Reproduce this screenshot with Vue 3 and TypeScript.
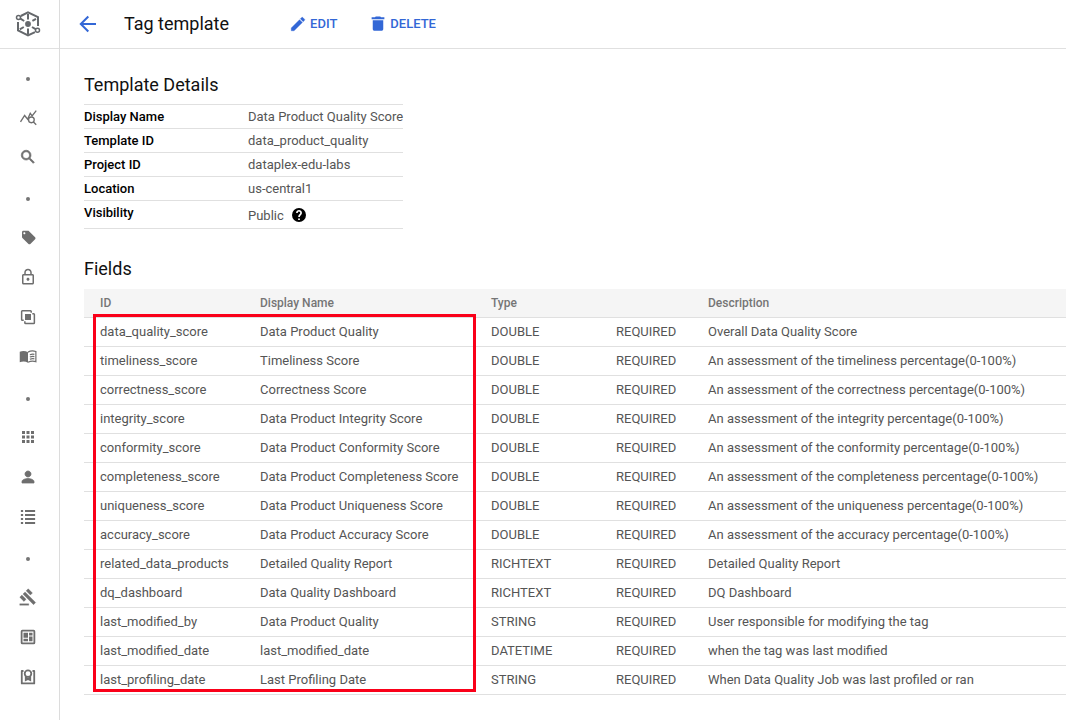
<script setup lang="ts">
interface Field {
  id: string
  name: string
  type: string
  description: string
}

const navItems: { icon: string; label: string }[] = [
  { icon: 'dot', label: 'Discover' },
  { icon: 'insights', label: 'Explore' },
  { icon: 'search', label: 'Search' },
  { icon: 'dot', label: 'Manage metadata' },
  { icon: 'tag', label: 'Tag templates' },
  { icon: 'lock', label: 'Policy tags' },
  { icon: 'copy', label: 'Entry groups' },
  { icon: 'book', label: 'Glossaries' },
  { icon: 'dot', label: 'Manage lakes' },
  { icon: 'grid', label: 'Manage' },
  { icon: 'person', label: 'Secure' },
  { icon: 'list', label: 'Process' },
  { icon: 'dot', label: 'Govern' },
  { icon: 'gavel', label: 'Governance' },
  { icon: 'dashboard', label: 'Profile' },
  { icon: 'badge', label: 'Data quality' },
]

const details = [
  { label: 'Display Name', value: 'Data Product Quality Score' },
  { label: 'Template ID', value: 'data_product_quality' },
  { label: 'Project ID', value: 'dataplex-edu-labs' },
  { label: 'Location', value: 'us-central1' },
]

const assessment = (what: string) => `An assessment of the ${what} percentage(0-100%)`

const fields: Field[] = [
  { id: 'data_quality_score', name: 'Data Product Quality', type: 'DOUBLE', description: 'Overall Data Quality Score' },
  { id: 'timeliness_score', name: 'Timeliness Score', type: 'DOUBLE', description: assessment('timeliness') },
  { id: 'correctness_score', name: 'Correctness Score', type: 'DOUBLE', description: assessment('correctness') },
  { id: 'integrity_score', name: 'Data Product Integrity Score', type: 'DOUBLE', description: assessment('integrity') },
  { id: 'conformity_score', name: 'Data Product Conformity Score', type: 'DOUBLE', description: assessment('conformity') },
  { id: 'completeness_score', name: 'Data Product Completeness Score', type: 'DOUBLE', description: assessment('completeness') },
  { id: 'uniqueness_score', name: 'Data Product Uniqueness Score', type: 'DOUBLE', description: assessment('uniqueness') },
  { id: 'accuracy_score', name: 'Data Product Accuracy Score', type: 'DOUBLE', description: assessment('accuracy') },
  { id: 'related_data_products', name: 'Detailed Quality Report', type: 'RICHTEXT', description: 'Detailed Quality Report' },
  { id: 'dq_dashboard', name: 'Data Quality Dashboard', type: 'RICHTEXT', description: 'DQ Dashboard' },
  { id: 'last_modified_by', name: 'Data Product Quality', type: 'STRING', description: 'User responsible for modifying the tag' },
  { id: 'last_modified_date', name: 'last_modified_date', type: 'DATETIME', description: 'when the tag was last modified' },
  { id: 'last_profiling_date', name: 'Last Profiling Date', type: 'STRING', description: 'When Data Quality Job was last profiled or ran' },
]
</script>

<template>
  <div class="shell">
    <aside class="sidebar">
      <div class="logo">
        <svg width="26" height="26" viewBox="0 0 26 26" fill="none" stroke="#65686c" stroke-width="2">
          <path d="M5.800 5 13 1.300l10 4.900v8.800M3 11v8.300l10 5.200 7-3.400" />
          <path d="M13 3v5.500M13 17.500v5.500M17.400 9.800 21 7.800M4.800 18.300l4-2.300M5 7.400l4.200 2.600M17 16l4 2.400" />
          <circle cx="13" cy="13" r="2.900" fill="#65686c" stroke="none" />
          <circle cx="3.500" cy="6.400" r="2" fill="#fff" stroke-width="1.500" />
          <circle cx="22.500" cy="19.300" r="2" fill="#fff" stroke-width="1.500" />
        </svg>
      </div>
      <nav class="nav" aria-label="Dataplex">
        <a v-for="item in navItems" :key="item.label" href="#" class="nav-item" :class="{ section: item.icon === 'dot' }" :aria-label="item.label">
          <span v-if="item.icon === 'dot'" class="dot"></span>
          <svg v-else class="icon" viewBox="0 0 24 24" fill="currentColor">
            <g v-if="item.icon === 'insights'" fill="none" stroke="currentColor" stroke-width="1.800">
              <path d="M2 18.500 7.500 10l4 5 3.500-8 2.500 3.500L23 3.500" />
              <circle cx="16.500" cy="15.800" r="3.800" fill="#fff" />
              <path d="m19 18.400 4 3.800" />
            </g>
            <path v-else-if="item.icon === 'search'" d="M15.500 14h-.79l-.28-.27A6.470 6.470 0 0 0 16 9.500 6.500 6.500 0 1 0 9.500 16c1.610 0 3.090-.59 4.230-1.570l.27.28v.79l5 4.990L20.490 19l-4.990-5zm-6 0C7.010 14 5 11.990 5 9.500S7.010 5 9.500 5 14 7.010 14 9.500 11.990 14 9.500 14z" stroke="currentColor" stroke-width=".9" />
            <path v-else-if="item.icon === 'tag'" d="M21.410 11.580l-9-9C12.050 2.220 11.550 2 11 2H4c-1.100 0-2 .9-2 2v7c0 .55.22 1.050.59 1.420l9 9c.36.36.86.58 1.410.58s1.050-.22 1.410-.59l7-7c.37-.36.59-.86.59-1.410s-.23-1.060-.59-1.420zM5.500 7C4.670 7 4 6.330 4 5.500S4.670 4 5.500 4 7 4.670 7 5.500 6.330 7 5.500 7z" transform="translate(2.200 2) scale(.9)" />
            <path v-else-if="item.icon === 'lock'" d="M18 8h-1V6c0-2.760-2.240-5-5-5S7 3.240 7 6v2H6c-1.100 0-2 .9-2 2v10c0 1.100.9 2 2 2h12c1.100 0 2-.9 2-2V10c0-1.100-.9-2-2-2zM9 6c0-1.660 1.340-3 3-3s3 1.340 3 3v2H9V6zm9 14H6V10h12v10zm-6-3c1.100 0 2-.9 2-2s-.9-2-2-2-2 .9-2 2 .9 2 2 2z" />
            <g v-else-if="item.icon === 'copy'">
              <path d="M16.300 6.300V4.500q0-1-1-1H4.500q-1 0-1 1v10.800q0 1 1 1h1.800M7.800 17.700v1.800q0 1 1 1h10.700q1 0 1-1V8.800q0-1-1-1h-1.800" fill="none" stroke="currentColor" stroke-width="2" />
              <path d="M8 8h8v8H8z" />
            </g>
            <g v-else-if="item.icon === 'book'">
              <path d="M1 5c3.500-1.700 7.500-1.500 11 .5v14c-3.500-2-7.500-2-11-.5z" />
              <path d="M12 5.500c3.500-2 7-2 10.500-.8v13.500c-3.500-1.200-7-1-10.500.8M14.500 9c2-.8 4-1 6-.6M14.500 12c2-.8 4-1 6-.6M14.500 15c2-.8 4-1 6-.6" fill="none" stroke="currentColor" stroke-width="1.600" />
            </g>
            <path v-else-if="item.icon === 'grid'" d="M4 8h4V4H4v4zm6 12h4v-4h-4v4zm-6 0h4v-4H4v4zm0-6h4v-4H4v4zm6 0h4v-4h-4v4zm6-10v4h4V4h-4zm-6 4h4V4h-4v4zm6 6h4v-4h-4v4zm0 6h4v-4h-4v4z" />
            <path v-else-if="item.icon === 'person'" d="M12 12c2.210 0 4-1.790 4-4s-1.790-4-4-4-4 1.790-4 4 1.790 4 4 4zm0 2c-2.670 0-8 1.340-8 4v2h16v-2c0-2.660-5.330-4-8-4z" stroke="currentColor" />
            <path v-else-if="item.icon === 'list'" d="M2.500 2.700h3v2.600h-3zM2.500 8h3v2.600h-3zM2.500 13.400h3V16h-3zM2.500 18.700h3v2.600h-3zM8 2.700h13.500v2.600H8zM8 8h13.500v2.600H8zM8 13.400h13.500V16H8zM8 18.700h13.500v2.600H8z" />
            <path v-else-if="item.icon === 'gavel'" d="M1 21h12v2H1zM5.245 8.070l2.830-2.827 14.140 14.142-2.828 2.828zM12.317 1l5.657 5.656-2.830 2.830-5.654-5.660zM3.825 9.485l5.657 5.657-2.828 2.828-5.657-5.657z" stroke="currentColor" stroke-width=".4" />
            <g v-else-if="item.icon === 'dashboard'">
              <rect x="3.500" y="3.500" width="17" height="17" rx="1" fill="none" stroke="currentColor" stroke-width="2.400" />
              <path d="M6 6.300h6V13H6zM13.400 6.300H18V10h-4.600zM6 14.400h6v3.400H6zM13.400 11.400H18v6.400h-4.600z" />
            </g>
            <g v-else fill="none" stroke="currentColor" stroke-width="2.400">
              <path d="M6 4H3.700v16.500h16.600V4H18" stroke-linejoin="round" />
              <circle cx="12" cy="7.500" r="4.400" />
              <path d="M7.800 10v8l4.200-2 4.200 2v-8L12 13z" fill="currentColor" stroke="none" />
            </g>
          </svg>
        </a>
      </nav>
    </aside>

    <div class="page">
      <header class="topbar">
        <button type="button" class="back" aria-label="Back">
          <svg width="24" height="24" viewBox="0 0 24 24" fill="none" stroke="currentColor" stroke-width="2">
            <path d="M20 12H5M12.300 4.500 4.800 12l7.500 7.500" />
          </svg>
        </button>
        <h1>Tag template</h1>
        <button type="button" class="action edit">
          <svg width="18" height="18" viewBox="0 0 24 24" fill="currentColor">
            <path d="M3 17.250V21h3.750L17.810 9.940l-3.750-3.750L3 17.250zM20.710 7.040c.39-.39.39-1.020 0-1.410l-2.340-2.340c-.39-.39-1.020-.39-1.410 0l-1.830 1.830 3.750 3.750 1.830-1.830z" stroke="currentColor" stroke-width=".5" />
          </svg>
          EDIT
        </button>
        <button type="button" class="action">
          <svg width="18" height="18" viewBox="0 0 24 24" fill="currentColor">
            <path d="M5 7v11.500C5 20 6 21 7.500 21h9c1.500 0 2.500-1 2.500-2.500V7H5zM20.500 3H16l-1-1H9L8 3H3.500v2.500h17z" />
          </svg>
          DELETE
        </button>
      </header>

      <main class="content">
        <h2>Template Details</h2>
        <table class="details">
          <tbody>
            <tr v-for="row in details" :key="row.label">
              <th scope="row">{{ row.label }}</th>
              <td>{{ row.value }}</td>
            </tr>
            <tr>
              <th scope="row">Visibility</th>
              <td>
                <div class="visibility">
                  Public
                  <button type="button" class="help" aria-label="Help">
                    <svg width="14" height="14" viewBox="2 2 20 20">
                      <circle cx="12" cy="12" r="10" />
                      <path d="M9 9a3 3 0 1 1 5.100 2.100C12.900 12.200 12 13 12 15M12 17v2" fill="none" stroke="#fff" stroke-width="2.400" />
                    </svg>
                  </button>
                </div>
              </td>
            </tr>
          </tbody>
        </table>

        <h2 class="fields-title">Fields</h2>
        <div class="fields-wrap">
          <table class="fields">
            <colgroup>
              <col class="col-id" />
              <col class="col-name" />
              <col class="col-type" />
              <col class="col-mode" />
              <col />
            </colgroup>
            <thead>
              <tr>
                <th scope="col">ID</th>
                <th scope="col">Display Name</th>
                <th scope="col">Type</th>
                <td></td>
                <th scope="col">Description</th>
              </tr>
            </thead>
            <tbody>
              <tr v-for="field in fields" :key="field.id">
                <td>{{ field.id }}</td>
                <td>{{ field.name }}</td>
                <td>{{ field.type }}</td>
                <td>REQUIRED</td>
                <td>{{ field.description }}</td>
              </tr>
            </tbody>
          </table>
          <div class="highlight"></div>
        </div>
      </main>
    </div>
  </div>
</template>

<style>
body {
  margin: 0;
  background: #fff;
}
</style>

<style scoped>
.shell {
  display: flex;
  min-height: 100vh;
  font-family: Roboto, "Liberation Sans", sans-serif;
  font-size: 13px;
  line-height: 20px;
  color: #555;
}

.shell * {
  box-sizing: border-box;
}

.sidebar {
  flex: 0 0 60px;
  border-right: 1px solid #dcdcdc;
}

.logo {
  display: flex;
  align-items: center;
  height: 49px;
  padding-left: 15px;
  border-bottom: 1px solid #e0e0e0;
}

.nav {
  display: flex;
  flex-direction: column;
  padding: 8px 3px 0 0;
}

.nav-item {
  display: flex;
  align-items: center;
  justify-content: center;
  height: 40px;
  color: #6e6e6e;
}

.section {
  padding-top: 4px;
}

.dot {
  width: 4px;
  height: 4px;
  border-radius: 50%;
  background: #757575;
}

.icon {
  width: 18px;
  height: 18px;
}

.page {
  flex: 1;
  min-width: 0;
}

.topbar {
  display: flex;
  align-items: center;
  height: 49px;
  padding-left: 16px;
  border-bottom: 1px solid #e0e0e0;
}

button {
  display: flex;
  align-items: center;
  padding: 0;
  border: 0;
  background: none;
  font: inherit;
  color: #3367d6;
  cursor: pointer;
}

h1,
h2 {
  margin: 0;
  font-size: 18px;
  font-weight: 400;
  line-height: 24px;
  color: #111;
}

h1 {
  margin: 0 60px 0 24px;
}

.action {
  gap: 3px;
  font-weight: 500;
}

.edit {
  margin-right: 32px;
}

.content {
  padding: 24px 0 24px 24px;
}

table {
  border-collapse: separate;
  border-spacing: 0;
}

th,
td {
  padding: 0;
  text-align: left;
  white-space: nowrap;
}

.details {
  margin-top: 7px;
  border-top: 1px solid #e0e0e0;
}

.details th,
.details td {
  height: 24px;
  border-bottom: 1px solid #e0e0e0;
  vertical-align: top;
  line-height: 23px;
}

.details th {
  width: 164px;
  font-weight: 500;
  color: #000;
}

.visibility {
  display: flex;
  align-items: center;
  gap: 8px;
  height: 27px;
  padding-top: 1px;
}

.help {
  color: #000;
}

.fields-title {
  margin-top: 28px;
}

.fields-wrap {
  position: relative;
  margin-top: 8px;
}

.fields {
  width: 100%;
  table-layout: fixed;
}

.col-id {
  width: 160px;
}

.col-name {
  width: 231px;
}

.col-type {
  width: 125px;
}

.col-mode {
  width: 92px;
}

.fields th,
.fields td {
  height: 29px;
  padding: 0 16px;
  border-bottom: 1px solid #e0e0e0;
}

.fields thead th,
.fields thead td {
  background: #f5f5f5;
  font-size: 12px;
  font-weight: 500;
  color: #757575;
}

.highlight {
  position: absolute;
  top: 25px;
  bottom: 3px;
  left: 9px;
  width: 383px;
  border: 3px solid #fa0019;
  pointer-events: none;
}
</style>
